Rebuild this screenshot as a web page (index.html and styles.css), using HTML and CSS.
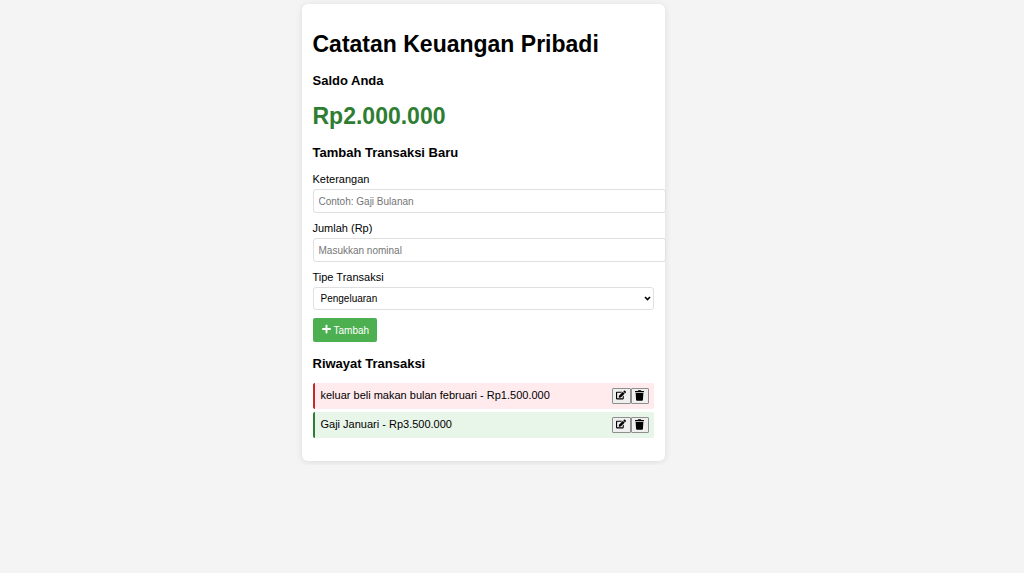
FILE: index.html
```html
<!DOCTYPE html>
<html lang="id">
<head>
    <meta charset="UTF-8">
    <meta name="viewport" content="width=device-width, initial-scale=1.0">
    <title>Catatan Keuangan Pribadi</title>
    <link rel="stylesheet" href="styles.css">
</head>
<body>
    <svg class="sprite" aria-hidden="true">
        <symbol id="icon-edit" viewBox="0 0 576 512">
            <path d="M402.600 83.200l90.200 90.200c3.800 3.800 3.800 10 0 13.800L274.400 405.600l-92.800 10.300c-12.400 1.400-22.900-9.100-21.500-21.500l10.300-92.800L388.800 83.200c3.800-3.800 10-3.800 13.800 0zm162-22.900l-48.800-48.800c-15.200-15.200-39.900-15.200-55.200 0l-35.400 35.400c-3.800 3.800-3.800 10 0 13.800l90.200 90.200c3.800 3.800 10 3.800 13.800 0l35.400-35.400c15.200-15.300 15.200-40 0-55.200zM384 346.200V448H64V128h229.800c3.200 0 6.200-1.300 8.500-3.500l40-40c7.600-7.600 2.200-20.500-8.500-20.500H48C21.500 64 0 85.500 0 112v352c0 26.500 21.500 48 48 48h352c26.500 0 48-21.500 48-48V306.200c0-10.700-12.900-16-20.500-8.500l-40 40c-2.200 2.300-3.500 5.300-3.500 8.500z"/>
        </symbol>
        <symbol id="icon-trash" viewBox="0 0 448 512">
            <path d="M432 32H312l-9.400-18.700A24 24 0 0 0 281.100 0H166.800a24 24 0 0 0-21.400 13.300L136 32H16A16 16 0 0 0 0 48v32a16 16 0 0 0 16 16h416a16 16 0 0 0 16-16V48a16 16 0 0 0-16-16zM32 128l21.200 339a48 48 0 0 0 47.900 45h245.800a48 48 0 0 0 47.900-45L416 128z"/>
        </symbol>
        <symbol id="icon-plus" viewBox="0 0 448 512">
            <path d="M416 208H272V64c0-17.700-14.300-32-32-32h-32c-17.700 0-32 14.300-32 32v144H32c-17.700 0-32 14.300-32 32v32c0 17.700 14.300 32 32 32h144v144c0 17.700 14.300 32 32 32h32c17.700 0 32-14.300 32-32V304h144c17.700 0 32-14.300 32-32v-32c0-17.700-14.300-32-32-32z"/>
        </symbol>
    </svg>

    <div class="container">
        <h1>Catatan Keuangan Pribadi</h1>
        <h3>Saldo Anda</h3>
        <h2 class="saldo">Rp2.000.000</h2>

        <h3>Tambah Transaksi Baru</h3>
        <form>
            <label for="keterangan">Keterangan</label>
            <input type="text" id="keterangan" placeholder="Contoh: Gaji Bulanan">

            <label for="jumlah">Jumlah (Rp)</label>
            <input type="number" id="jumlah" placeholder="Masukkan nominal">

            <label for="tipe">Tipe Transaksi</label>
            <select id="tipe">
                <option value="pemasukan">Pemasukan</option>
                <option value="pengeluaran" selected>Pengeluaran</option>
            </select>

            <button type="button" class="btn-tambah"><svg class="icon-plus" aria-hidden="true"><use href="#icon-plus"/></svg>Tambah</button>
        </form>

        <h3>Riwayat Transaksi</h3>
        <ul class="riwayat">
            <li class="pengeluaran">
                <span>keluar beli makan bulan februari - Rp1.500.000</span>
                <div class="aksi">
                    <button type="button" aria-label="Edit"><svg class="icon-edit"><use href="#icon-edit"/></svg></button>
                    <button type="button" aria-label="Hapus"><svg class="icon-trash"><use href="#icon-trash"/></svg></button>
                </div>
            </li>
            <li class="pemasukan">
                <span>Gaji Januari - Rp3.500.000</span>
                <div class="aksi">
                    <button type="button" aria-label="Edit"><svg class="icon-edit"><use href="#icon-edit"/></svg></button>
                    <button type="button" aria-label="Hapus"><svg class="icon-trash"><use href="#icon-trash"/></svg></button>
                </div>
            </li>
        </ul>
    </div>
</body>
</html>
```

FILE: styles.css
```css
body {
    margin: 0;
    padding: 4px 58px 4px 0;
    background-color: #f4f4f4;
    font-family: Arial, "Liberation Sans", sans-serif;
    font-size: 11px;
    line-height: 14px;
}

.sprite {
    display: none;
}

.container {
    max-width: 341px;
    margin: 0 auto;
    padding: 12px 11px 11px;
    background: white;
    border-radius: 6px;
    box-shadow: 0 1px 7px rgba(0, 0, 0, 0.1);
}

h1, h2 {
    margin: 15px 0;
    font-size: 23px;
    line-height: 27px;
}

h3 {
    margin: 14px 0 12px;
    font-size: 13px;
    line-height: 15px;
}

.saldo {
    color: #2e7d32;
}

label {
    display: block;
    margin-bottom: 3px;
}

input, select {
    display: block;
    width: 100%;
    margin: 0 0 8px;
    border: 1px solid #e0e0e0;
    border-radius: 3px;
    background: white;
    font-family: inherit;
    font-size: 10px;
}

input {
    height: 22px;
    padding: 0 5px;
    appearance: textfield;
}

select {
    height: 23px;
    padding: 0 7px;
    appearance: none;
    background: white url("data:image/svg+xml,%3Csvg xmlns='http://www.w3.org/2000/svg' width='7' height='5'%3E%3Cpath d='M1 1l2.500 2.500L6 1' fill='none' stroke='black' stroke-width='1.600'/%3E%3C/svg%3E") no-repeat right 2px center;
    color: black;
}

.btn-tambah {
    display: flex;
    align-items: center;
    gap: 3px;
    height: 24px;
    padding: 0 8px 0 9px;
    border: none;
    border-radius: 2px;
    background: #4caf50;
    color: white;
    font-family: inherit;
    font-size: 10px;
    cursor: pointer;
}

.icon-plus {
    width: 9px;
    height: 10px;
    margin-bottom: 3px;
    fill: white;
}

.riwayat {
    list-style: none;
    margin: 0 0 12px;
    padding: 0;
}

.riwayat li {
    display: flex;
    justify-content: space-between;
    align-items: center;
    height: 26px;
    margin-bottom: 3px;
    padding: 0 5px 0 6px;
    border-left: 2px solid;
    border-radius: 2px;
}

.riwayat .pengeluaran {
    background: #ffebee;
    border-color: #c62828;
}

.riwayat .pemasukan {
    background: #e8f5e9;
    border-color: #2e7d32;
}

.riwayat span {
    padding-bottom: 2px;
}

.aksi {
    display: flex;
}

.aksi button {
    display: flex;
    justify-content: center;
    width: 19px;
    height: 16px;
    padding: 1px 0 0;
    border: 1px solid #8f8f8f;
    border-radius: 1px;
    background: #efefef;
    cursor: pointer;
}

.aksi button + button {
    width: 18px;
}

.icon-edit {
    width: 10px;
    height: 10px;
}

.icon-trash {
    width: 9px;
    height: 11px;
}
```
